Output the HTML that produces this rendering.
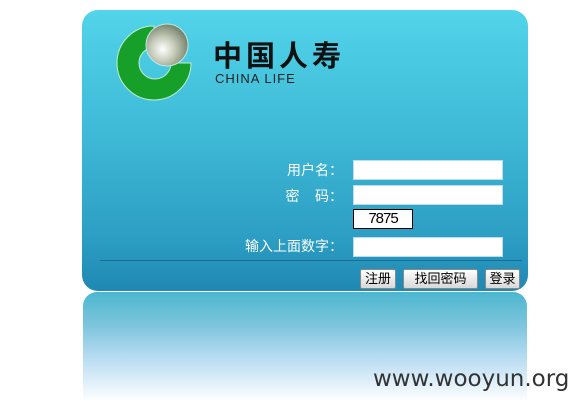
<!DOCTYPE html>
<html><head><meta charset="utf-8"><style>
body{margin:0;width:579px;height:410px;background:#fff;position:relative;overflow:hidden;font-family:"Liberation Sans","Noto Sans CJK SC",sans-serif}
.panel{position:absolute;left:82px;top:10px;width:446px;height:281px;border-radius:16px;background:linear-gradient(#52d4ea 0%,#40bcd8 40%,#2d9fc4 80%,#1f88b3 100%)}
.refl{position:absolute;left:83px;top:292px;width:444px;height:110px;border-radius:14px 14px 0 0;background:linear-gradient(#4cb6cf 0%,#7cc5dc 30%,#b8dcf2 60%,#fff 100%)}
.lbl{position:absolute;color:#fff;font-size:14px;text-align:right;right:236px}
.in{position:absolute;left:353px;width:148px;height:18px;background:#fff;border:1px solid #bde}
.btn{position:absolute;top:269px;height:18px;background:linear-gradient(#fff,#d8d8d8);border:1px solid #888;border-radius:2px;font-size:13px;line-height:18px;text-align:center;color:#000}
</style></head><body>
<div class="refl"></div>
<div class="panel"></div>
<svg style="position:absolute;left:0;top:0" width="579" height="300">
<defs><radialGradient id="b" cx="0.4" cy="0.6" r="0.65"><stop offset="0" stop-color="#fff"/><stop offset="0.45" stop-color="#c4cab8"/><stop offset="1" stop-color="#6d7a62"/></radialGradient></defs>
<path d="M154 26 A37 37 0 1 0 191 63 L171 63 A16 16 0 1 1 154 47 Z" fill="#16a02a" stroke="#bfeecf" stroke-width="1"/>
<circle cx="167" cy="45" r="21" fill="url(#b)" stroke="#bfe6e6" stroke-width="1"/>
</svg>
<div style="position:absolute;left:213px;top:33px;font-size:29px;font-weight:bold;letter-spacing:4px;color:#111;font-family:'Noto Sans CJK SC',sans-serif">中国人寿</div>
<div style="position:absolute;left:215px;top:71px;font-size:13px;color:#222;letter-spacing:1px">CHINA LIFE</div>
<div class="lbl" style="top:160px">用户名：</div>
<div class="lbl" style="top:186px">密&nbsp;&nbsp;&nbsp;&nbsp;码：</div>
<div class="lbl" style="top:236px">输入上面数字：</div>
<div class="in" style="top:160px"></div>
<div class="in" style="top:185px"></div>
<div class="in" style="top:237px"></div>
<div style="position:absolute;left:353px;top:209px;width:58px;height:18px;background:#fff;border:1px solid #000;font-size:15px;line-height:18px;text-align:center;color:#000;letter-spacing:-1px">7875</div>
<div style="position:absolute;left:100px;top:260px;width:422px;height:1px;background:#1a6d92"></div>
<div class="btn" style="left:360px;width:34px">注册</div>
<div class="btn" style="left:403px;width:73px">找回密码</div>
<div class="btn" style="left:485px;width:33px">登录</div>
<div style="position:absolute;left:373px;top:366px;font-size:23px;color:#333;font-family:'DejaVu Sans',sans-serif">www.wooyun.org</div>
</body></html>
